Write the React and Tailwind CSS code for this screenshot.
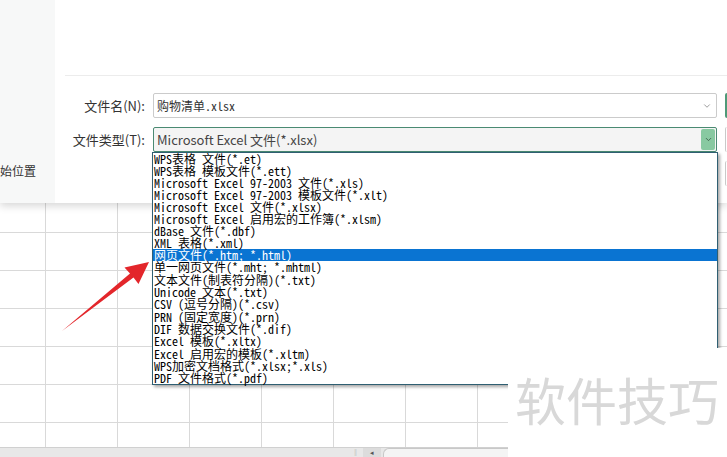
import { ChevronDown } from 'lucide-react';

const fileTypes = [
  'WPS表格 文件(*.et)',
  'WPS表格 模板文件(*.ett)',
  'Microsoft Excel 97-2003 文件(*.xls)',
  'Microsoft Excel 97-2003 模板文件(*.xlt)',
  'Microsoft Excel 文件(*.xlsx)',
  'Microsoft Excel 启用宏的工作簿(*.xlsm)',
  'dBase 文件(*.dbf)',
  'XML 表格(*.xml)',
  '网页文件(*.htm; *.html)',
  '单一网页文件(*.mht; *.mhtml)',
  '文本文件(制表符分隔)(*.txt)',
  'Unicode 文本(*.txt)',
  'CSV (逗号分隔)(*.csv)',
  'PRN (固定宽度)(*.prn)',
  'DIF 数据交换文件(*.dif)',
  'Excel 模板(*.xltx)',
  'Excel 启用宏的模板(*.xltm)',
  'WPS加密文档格式(*.xlsx;*.xls)',
  'PDF 文件格式(*.pdf)',
];

const rowHeights = ['h-[30px]', 'h-[38px]', 'h-[38px]', 'h-[38px]', 'h-[38px]', 'h-[38px]', 'h-[24px]'];
const cols = Array.from({ length: 10 });

function Sheet() {
  return (
    <div className="flex flex-col">
      {rowHeights.map((h, r) => (
        <div key={r} className={`flex ${h} ${r < rowHeights.length - 1 ? 'border-b border-[#d9d9d9]' : ''}`}>
          <div className="w-[46px] shrink-0 border-r border-[#d9d9d9]" />
          {cols.map((_, c) => (
            <div key={c} className="w-[72px] shrink-0 border-r border-[#d9d9d9]" />
          ))}
        </div>
      ))}
      <div className="flex h-[10px] items-center border-t border-[#d0d0d0] bg-[#e8e8e8] pl-[352px]">
        <span className="text-[7px] leading-none text-[#999]">‖</span>
        <div className="ml-[4px] flex h-full w-[18px] items-center justify-center bg-[#dcdcdc] text-[7px] leading-none text-[#555]">◂</div>
        <div className="ml-[2px] h-full flex-1 rounded-tl-[6px] border-l border-t border-[#c8c8c8] bg-[#f4f4f4]" />
      </div>
    </div>
  );
}

function FileTypeList() {
  return (
    <div
      className="absolute left-[152px] top-[152px] z-20 w-[566px] border border-[#2f5f72] bg-white shadow-[2px_2px_3px_rgba(0,0,0,0.35)]"
      style={{ fontFamily: '"Noto Sans Mono CJK SC", "Liberation Mono", monospace' }}
    >
      {fileTypes.map((t, i) => (
        <div
          key={t}
          className={`flex items-center whitespace-nowrap pl-[1px] text-[12px] leading-none ${i < 8 ? 'h-[12px]' : 'h-[12.3px]'} ${
            i === 8 ? 'bg-[#0a74d2] text-white' : 'text-black'
          }`}
        >
          {t}
        </div>
      ))}
    </div>
  );
}

function Arrow() {
  return (
    <svg className="pointer-events-none absolute left-0 top-0 z-30" width="727" height="457">
      <polygon
        points="62,331 130,273.5 124.5,267.5 149,262 138.5,284 133.5,277.6"
        fill="#e3262b"
      />
    </svg>
  );
}

export default function App() {
  return (
    <div
      className="relative h-[457px] w-[727px] overflow-hidden bg-white"
      style={{ fontFamily: '"Noto Sans CJK SC", sans-serif' }}
    >
      <div className="relative z-10 flex h-[203px] bg-white shadow-[0_3px_8px_rgba(0,0,0,0.16)]">
        <aside className="w-[55px] shrink-0 bg-[#f7f8f8] pt-[157px]">
          <span className="whitespace-nowrap text-[12px] text-[#333]">始位置</span>
        </aside>

        <main className="flex-1 pl-[10px] pt-[75px]">
          <div className="flex flex-col gap-[9px] border-t border-[#ececec] pt-[17px]">
            <div className="flex items-center">
              <label className="w-[80px] text-right text-[13px] text-[#333]">文件名(N):</label>
              <div className="ml-[8px] flex h-[25px] w-[564px] items-center justify-between rounded-[2px] border border-[#cbcbcb] bg-white pl-[3px] pr-[4px]">
                <span
                  className="text-[12px] text-[#333]"
                  style={{ fontFamily: '"Noto Sans Mono CJK SC", "Liberation Mono", monospace' }}
                >
                  购物清单.xlsx
                </span>
                <ChevronDown size={10} strokeWidth={2} color="#8a8a8a" />
              </div>
              <div className="ml-[8px] h-[25px] w-[3px] rounded-l-[2px] border-l-2 border-[#4f9a78]" />
            </div>

            <div className="flex items-center">
              <label className="w-[80px] text-right text-[13px] text-[#333]">文件类型(T):</label>
              <div className="ml-[8px] flex h-[25px] w-[564px] items-center justify-between rounded-[2px] border border-[#4a8a72] bg-[#f4f4f4] pl-[3px] pr-[1px]">
                <span className="text-[13px] text-[#444]">Microsoft Excel 文件(*.xlsx)</span>
                <div className="flex h-[21px] w-[14px] items-center justify-center rounded-[2px] bg-[#88c9a1]">
                  <ChevronDown size={9} strokeWidth={2.2} color="#3a5a48" />
                </div>
              </div>
              <div className="ml-[8px] h-[25px] w-[3px] rounded-l-[2px] border-l border-[#c9c9c9]" />
            </div>

            <div className="flex items-center">
              <div className="ml-[660px] h-[25px] w-[3px] rounded-l-[2px] border-l border-[#c9c9c9]" />
            </div>
          </div>
        </main>
      </div>

      <Sheet />
      <FileTypeList />
      <Arrow />

      <div className="absolute left-[508px] top-[348px] z-40 h-[109px] w-[219px] bg-white pl-[7px] pt-[26px]">
        <span className="whitespace-nowrap text-[51px] leading-none text-[#d8d8d8]">软件技巧</span>
      </div>
    </div>
  );
}
